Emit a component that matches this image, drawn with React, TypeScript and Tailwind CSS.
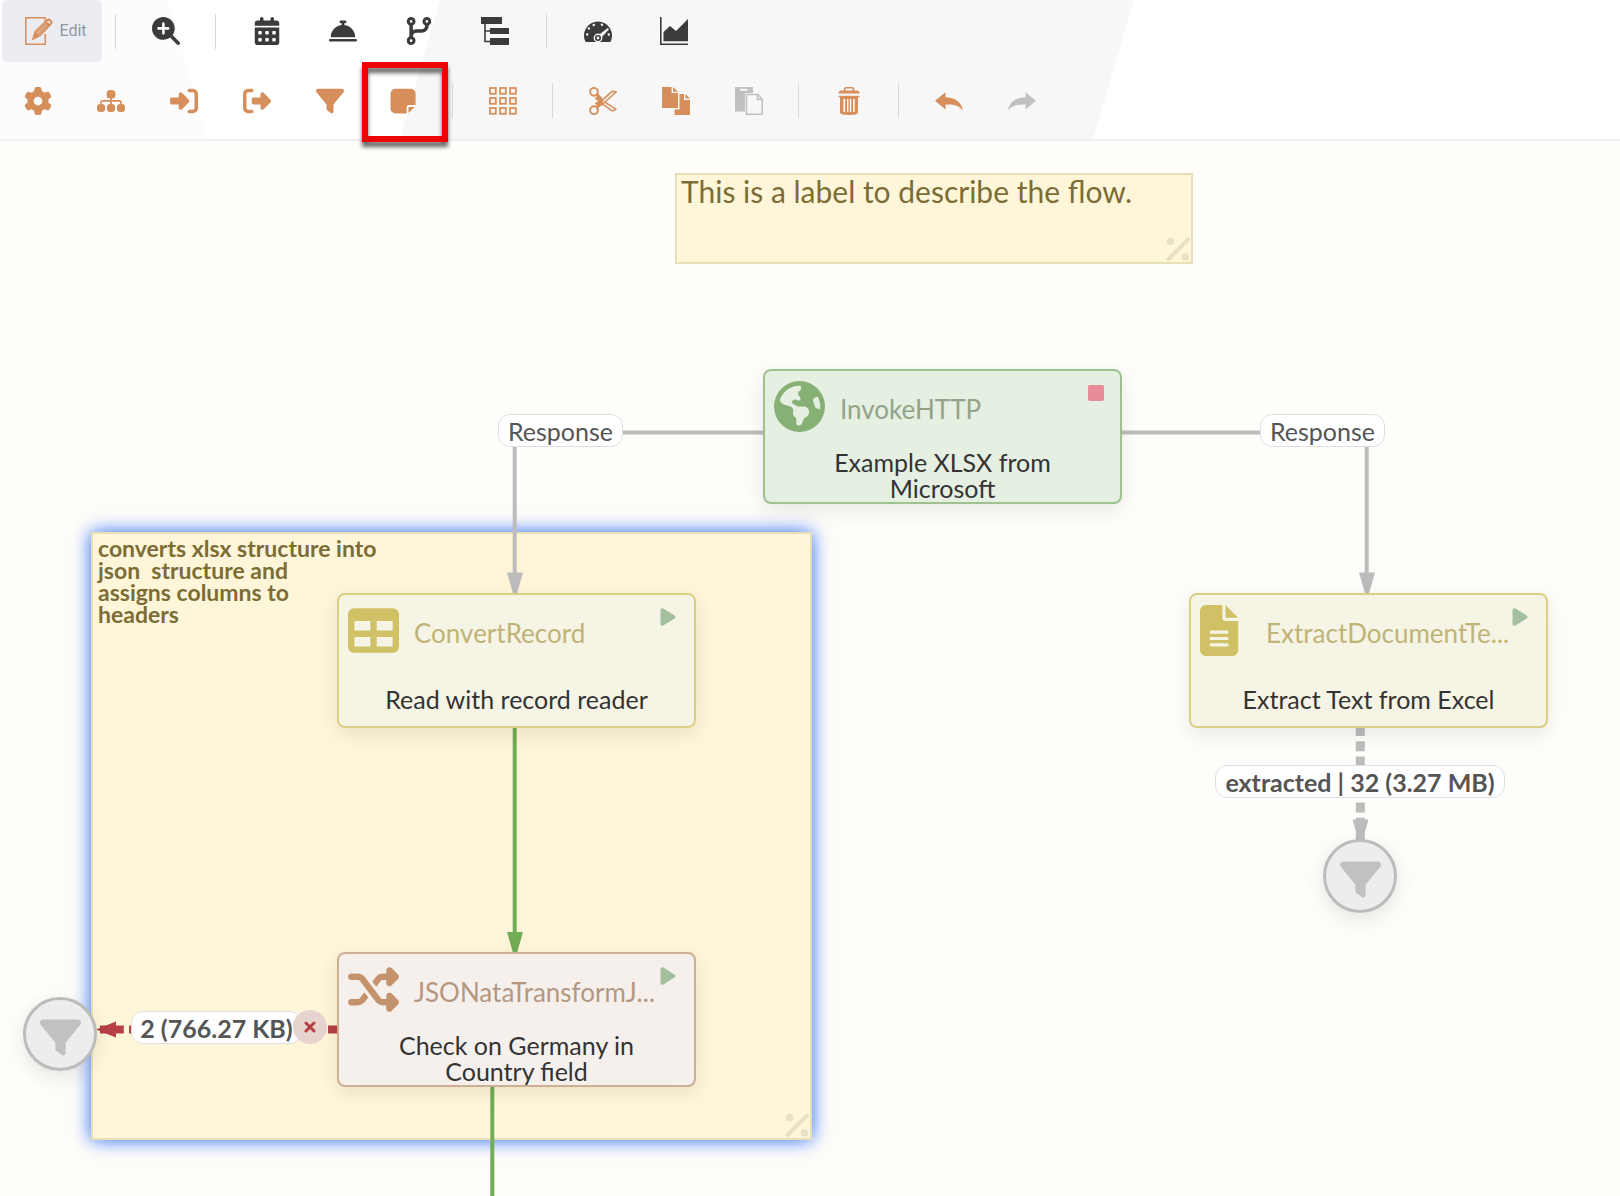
import React from 'react';
import {
    FaMagnifyingGlassPlus,
    FaCalendarDays,
    FaBellConcierge,
    FaCodeBranch,
    FaGear,
    FaRightToBracket,
    FaRightFromBracket,
    FaFilter,
    FaEarthAmericas,
    FaTable,
    FaShuffle,
    FaFileLines,
    FaPlay,
} from 'react-icons/fa6';

const ICON = 'w-7 h-7';

/* Toolbar icons, all on a 28px grid */

const EditIcon = () => (
    <svg viewBox="0 0 28 28" className={ICON} fill="none" stroke="currentColor">
        <path d="M20.3 5V.8H.8v26.4h19.5V17" strokeWidth="1.5" />
        <path d="M8 22l2.2-7.6L22.5 2.8c1.6-1.4 5.2 1.8 3.9 3.6L15 18.6z" strokeWidth="1.6" fill="currentColor" fillOpacity="0.35" />
        <path d="M8 22l2.6-7.8 4.4 4.4z" fill="currentColor" stroke="none" />
        <path d="M20.4 4.6l4.4 4.2M12.2 15.2L22 6M13.8 17l9.4-9.6" strokeWidth="1.5" />
    </svg>
);

const TreeIcon = () => (
    <svg viewBox="0 0 28 28" className={ICON} fill="currentColor">
        <path d="M0 0h21v7H0zM9 11h19v6H9zM9 21h19v7H9z" />
        <path d="M4 7v17.5h5M4 14h5" fill="none" stroke="currentColor" strokeWidth="1.6" />
    </svg>
);

const GaugeIcon = () => (
    <svg viewBox="0 0 28 28" className={ICON}>
        <path d="M1.6 25A14 14 0 1 1 26.4 25z" fill="currentColor" />
        <g fill="#f7f7f7">
            <circle cx="3.2" cy="17.5" r="1.2" />
            <circle cx="4.9" cy="11.4" r="1.2" />
            <circle cx="9.7" cy="8" r="1.2" />
            <circle cx="18" cy="7.8" r="1.2" />
            <circle cx="24.8" cy="17.5" r="1.2" />
            <path d="M14 18.5l9.8-7.6 1.2 1.4-8 8.6z" />
            <circle cx="14" cy="21" r="4.4" />
        </g>
        <circle cx="14" cy="21" r="2.2" fill="none" stroke="currentColor" strokeWidth="1.6" />
    </svg>
);

const ChartIcon = () => (
    <svg viewBox="0 0 28 28" className={ICON}>
        <path d="M.8 0v27.2H28" fill="none" stroke="currentColor" strokeWidth="1.6" />
        <path d="M3.5 24.3V15L10 9l6 5L28 2v22.3z" fill="currentColor" />
    </svg>
);

const SitemapIcon = () => (
    <svg viewBox="0 0 28 28" className={ICON} fill="currentColor">
        <rect x="9.6" y="3" width="8.8" height="8.6" rx="3.6" />
        <rect x="0" y="17" width="8" height="8" rx="3" />
        <rect x="10" y="17" width="8" height="8" rx="3" />
        <rect x="20" y="17" width="8" height="8" rx="3" />
        <path d="M14 10v8M4 18v-2.4q0-1.8 1.8-1.8h16.4q1.8 0 1.8 1.8V18" fill="none" stroke="currentColor" strokeWidth="1.7" />
    </svg>
);

const NoteIcon = () => (
    <svg viewBox="0 0 28 28" className={ICON} fill="currentColor">
        <path d="M6 1.8h15.6a5 5 0 0 1 5 5V18h-6.7q-2.2 0-2.2 2.2v6.2H6.500a5 5 0 0 1-5-5V6.8a5 5 0 0 1 5-5z" />
        <path d="M19.500 20h6.2l-6.200 6z" />
    </svg>
);

const GridIcon = () => (
    <svg viewBox="0 0 28 28" className={ICON} fill="none" stroke="currentColor" strokeWidth="1.8">
        {[1, 11, 21].map((y) =>
            [1, 11, 21].map((x) => <rect key={`${x}-${y}`} x={x} y={y} width="5.8" height="5.8" />)
        )}
    </svg>
);

const ScissorsIcon = () => (
    <svg viewBox="0 0 28 28" className={ICON} fill="none" stroke="currentColor">
        <circle cx="5" cy="4.8" r="3.9" strokeWidth="1.9" />
        <circle cx="5" cy="23.2" r="3.9" strokeWidth="1.9" />
        <path d="M8.500 7l4 4.200c1.200 1.600 1.200 4 0 5.600L8.500 21c.6-3-.2-4-2.500-4.600 2.600 0 3.400-1 3.400-2.400S8.600 11.600 6 11.600c2.300-.6 3.100-1.600 2.500-4.600z" fill="currentColor" strokeWidth="1.400" />
        <path d="M10.5 15.8L23 4.4l4.2.6L12 18.5M15.5 14.8l11.3 7.4c-1.4 1.5-3 1.7-4.300 1.2L13 16.6" strokeWidth="1.6" />
    </svg>
);

const CopyIcon = () => (
    <svg viewBox="0 0 28 28" className={ICON} fill="currentColor">
        <path d="M0 0h9.6v6H16v15H0z" />
        <path d="M11 0l5 4.8h-5z" />
        <path d="M17.5 7H22v6h6v15H12.5v-5.5h5z" />
        <path d="M23.5 7l4.5 4.6h-4.5z" />
    </svg>
);

const PasteIcon = () => (
    <svg viewBox="0 0 28 28" className={ICON}>
        <path d="M0 0h18v6h-8v18.5H0z" fill="currentColor" />
        <path d="M5 1.8h7.5v2H5z" fill="#f7f7f7" />
        <path d="M11.5 7.5H23l4.2 5v14.7H11.5z" fill="#f7f7f7" stroke="currentColor" strokeWidth="1.5" />
        <path d="M22.5 7.5v5h5" fill="none" stroke="currentColor" strokeWidth="1.5" />
    </svg>
);

const TrashIcon = () => (
    <svg viewBox="0 0 28 28" className={ICON} fill="currentColor">
        <path d="M9.6 4V1.8q0-1 1-1h6.8q1 0 1 1V4" fill="none" stroke="currentColor" strokeWidth="1.6" />
        <path d="M5.5 3.6h17l2 1.4v1.6h-21V5z" />
        <path d="M3.5 8.8h21v1.4h-21z" />
        <path
            fillRule="evenodd"
            d="M5 10h18v15.5q0 2.5-9 2.5t-9-2.5zM8.4 12v13h1.7V12zM12 12v13h1.4V12zM14.8 12v13h1.4V12zM18 12v13h1.7V12z"
        />
    </svg>
);

const UndoIcon = () => (
    <svg viewBox="0 0 28 28" className={ICON} fill="currentColor">
        <path d="M0 13.8L10.5 5.2v5c9 .2 16.5 4.6 17.3 13.6-3.5-5.4-9-6.6-17.3-6.2v4.8z" />
    </svg>
);

const RedoIcon = () => (
    <svg viewBox="0 0 28 28" className={ICON} fill="currentColor">
        <path d="M28 13.8L17.5 5.2v5C8.5 10.4 1 14.8.2 23.8c3.5-5.4 9-6.6 17.3-6.2v4.8z" />
    </svg>
);

/* Toolbar parts */

interface ToolButtonProps {
    label: string;
    wide?: boolean;
    disabled?: boolean;
    highlighted?: boolean;
    children: React.ReactNode;
}

const ToolButton: React.FC<ToolButtonProps> = ({ label, wide, disabled, highlighted, children }) => (
    <button
        aria-label={label}
        disabled={disabled}
        className={`relative flex h-full shrink-0 items-center justify-center disabled:text-[#bfc1c0] ${wide ? 'w-[76px]' : 'w-[73px]'}`}
    >
        {children}
        {highlighted && (
            <span className="absolute top-0 -left-1 z-20 h-20 w-[86px] border-6 border-[#eb0505] drop-shadow-[0_5px_2px_rgba(0,0,0,0.6)]" />
        )}
    </button>
);

const Separator = () => <div className="mx-[13px] h-[35px] w-px shrink-0 bg-[#d7d8de]" />;

const Toolbar = () => (
    <header className="relative z-10 border-b-2 border-[#efeef0] bg-white">
        {/* Slanted backdrop */}
        <div className="absolute inset-y-0 left-0 w-[208px] bg-[#fcfcfd] [clip-path:polygon(0_0,168px_0,180px_43px,100%_100%,0_100%)]" />
        <div className="absolute inset-y-0 left-[400px] w-[734px] bg-[#f7f7f7] [clip-path:polygon(40px_0,100%_0,693px_100%,0_100%)]" />

        <div className="relative flex h-[62px] items-center pl-0.5 text-[#3b3b3b]">
            <button className="flex h-full w-[100px] shrink-0 items-center justify-center gap-1.5 rounded-md bg-[#ecedf2] pl-2 text-[#d68f5b]">
                <EditIcon />
                <span className="font-['Roboto',sans-serif] text-base text-[#8f96a5]">Edit</span>
            </button>
            <Separator />
            <ToolButton label="Search"><FaMagnifyingGlassPlus className={ICON} /></ToolButton>
            <Separator />
            <ToolButton label="Schedule" wide><FaCalendarDays className={ICON} /></ToolButton>
            <ToolButton label="Services" wide><FaBellConcierge className={ICON} /></ToolButton>
            <ToolButton label="Versions" wide><FaCodeBranch className={ICON} /></ToolButton>
            <ToolButton label="Hierarchy" wide><TreeIcon /></ToolButton>
            <Separator />
            <ToolButton label="Dashboard" wide><GaugeIcon /></ToolButton>
            <ToolButton label="Statistics" wide><ChartIcon /></ToolButton>
        </div>

        <div className="relative flex h-[77px] items-center pl-px text-[#d68f5b]">
            <ToolButton label="Processor"><FaGear className={ICON} /></ToolButton>
            <ToolButton label="Process group"><SitemapIcon /></ToolButton>
            <ToolButton label="Input port"><FaRightToBracket className={ICON} /></ToolButton>
            <ToolButton label="Output port"><FaRightFromBracket className={ICON} /></ToolButton>
            <ToolButton label="Funnel"><FaFilter className={ICON} /></ToolButton>
            <ToolButton label="Label" highlighted><NoteIcon /></ToolButton>
            <Separator />
            <ToolButton label="Align"><GridIcon /></ToolButton>
            <Separator />
            <ToolButton label="Cut"><ScissorsIcon /></ToolButton>
            <ToolButton label="Copy"><CopyIcon /></ToolButton>
            <ToolButton label="Paste" disabled><PasteIcon /></ToolButton>
            <Separator />
            <ToolButton label="Delete"><TrashIcon /></ToolButton>
            <Separator />
            <ToolButton label="Undo"><UndoIcon /></ToolButton>
            <ToolButton label="Redo" disabled><RedoIcon /></ToolButton>
        </div>
    </header>
);

/* Canvas parts */

const ResizeHandle = () => (
    <svg viewBox="0 0 24 24" className="absolute right-px bottom-px h-6 w-6" fill="#e9e1c3">
        <circle cx="4.5" cy="4.5" r="3.8" />
        <circle cx="19.5" cy="20" r="3.8" />
        <path d="M2.5 22L22 2.5" stroke="#e9e1c3" strokeWidth="4" strokeLinecap="round" />
    </svg>
);

interface ProcessorProps {
    place: string;
    tone: 'green' | 'yellow' | 'brown';
    icon: React.ReactNode;
    type: string;
    name: string;
    running?: boolean;
}

const tones = {
    green: { box: 'border-[#9dc28f] bg-[#e5efe2]', icon: 'text-[#87b174]', type: 'text-[#92a488]' },
    yellow: { box: 'border-[#dbcf82] bg-[#f6f4e5]', icon: 'text-[#d1c166]', type: 'text-[#c0b378]' },
    brown: { box: 'border-[#d0ad95] bg-[#f6f0ed]', icon: 'text-[#c4936d]', type: 'text-[#b5977f]' },
};

const Processor: React.FC<ProcessorProps> = ({ place, tone, icon, type, name, running }) => (
    <div
        className={`absolute flex h-[135px] w-[359px] flex-col rounded-lg border-2 leading-[26px] shadow-[0_6px_20px_rgba(0,0,0,0.09)] ${tones[tone].box} ${place}`}
    >
        <div className="flex h-[77px] shrink-0 pt-[10px] pl-[9px]">
            <div className={`w-[66px] text-[51px] ${tones[tone].icon}`}>{icon}</div>
            <div className={`pt-[15px] text-[26px] leading-[26px] whitespace-nowrap ${tones[tone].type}`}>{type}</div>
        </div>
        <div className="flex flex-1 items-center justify-center px-10 text-center text-[25px] leading-[26px] text-[#333]">{name}</div>
        {running ? (
            <FaPlay className="absolute top-3 right-4 h-5 w-5 text-[#a3bf9d]" />
        ) : (
            <span className="absolute top-[14px] right-4 h-4 w-4 rounded-xs bg-[#e88d97]" />
        )}
    </div>
);

const Funnel: React.FC<{ place: string }> = ({ place }) => (
    <div
        className={`absolute flex h-[74px] w-[74px] items-center justify-center rounded-full border-3 border-[#bcbcbc] bg-[#ededed] pt-1.5 text-[#c1c1c1] shadow-[0_6px_20px_rgba(0,0,0,0.1)] ${place}`}
    >
        <FaFilter className="h-[41px] w-[41px]" />
    </div>
);

const Pill: React.FC<{ place: string; bold?: boolean; children: React.ReactNode }> = ({ place, bold, children }) => (
    <div
        className={`absolute flex h-[33px] items-center justify-center rounded-xl border border-[#e0e0e4] bg-white text-[25px] leading-[30px] whitespace-nowrap text-[#555] ${bold ? 'font-bold' : ''} ${place}`}
    >
        {children}
    </div>
);

const Connections = () => (
    <svg className="absolute inset-0 h-full w-full" fill="none" strokeWidth="4">
        <g stroke="#bcbcbc">
            <path d="M763 291.500H514.700v142" />
            <path d="M1122 291.500h244.700v142" />
            <path d="M1360.300 585v115" strokeWidth="9" strokeDasharray="10 5.300" />
        </g>
        <g fill="#bcbcbc">
            <path d="M507 431.500h16l-6 21h-4zM1359 431.500h16l-6 21h-4zM1352.500 678.500h16l-6 21h-4z" />
        </g>
        <path d="M514.700 586v206M492.300 945v400" stroke="#71ad56" />
        <path d="M507 791h16l-6 21h-4z" fill="#71ad56" />
        <path d="M338 888.500H100" stroke="#b73f46" strokeWidth="8" strokeDasharray="10 5.300" />
        <path d="M96 888.500l20-8v16z" fill="#b73f46" />
    </svg>
);

const Canvas = () => (
    <main className="relative flex-1 overflow-hidden bg-[#fffdf9]">
        {/* Labels */}
        <div className="absolute top-8 left-[675px] h-[91px] w-[518px] border-2 border-[#e9dfb7] bg-[#fff6d9] pl-1 text-[30px] leading-8 text-[#7b6d35]">
            This is a label to describe the flow.
            <ResizeHandle />
        </div>
        <div className="absolute top-[391px] left-[91px] h-[608px] w-[721px] border-2 border-[#e9dfb7] bg-[#fff6d9] pt-[3px] pl-[5px] text-[23px] leading-[22px] font-bold whitespace-pre text-[#7b6d35] shadow-[0_0_18px_#2468ff]">
            {'converts xlsx structure into\njson  structure and\nassigns columns to\nheaders'}
            <ResizeHandle />
        </div>

        <Connections />

        <Pill place="top-[273px] left-[498px] w-[125px]">Response</Pill>
        <Pill place="top-[273px] left-[1260px] w-[125px]">Response</Pill>
        <Pill place="top-[624px] left-[1215px] w-[290px]" bold>extracted | 32 (3.27 MB)</Pill>
        <Pill place="top-[870px] left-[131px] w-[171px]" bold>2 (766.27 KB)</Pill>
        <div className="absolute top-[869px] left-[293px] flex h-[34px] w-[34px] items-center justify-center rounded-full bg-[#e8d4cf] text-[#b73f46]">
            <svg viewBox="0 0 12 12" className="h-3 w-3" fill="none" stroke="currentColor" strokeWidth="3" strokeLinecap="round">
                <path d="M2 2l8 8M10 2l-8 8" />
            </svg>
        </div>

        {/* Nodes */}
        <Processor place="top-[228px] left-[763px]" tone="green" icon={<FaEarthAmericas />} type="InvokeHTTP" name="Example XLSX from Microsoft" />
        <Processor place="top-[452px] left-[337px]" tone="yellow" icon={<FaTable />} type="ConvertRecord" name="Read with record reader" running />
        <Processor
            place="top-[452px] left-[1189px]"
            tone="yellow"
            icon={<FaFileLines preserveAspectRatio="xMinYMid meet" />}
            type="ExtractDocumentTe..."
            name="Extract Text from Excel"
            running
        />
        <Processor place="top-[811px] left-[337px]" tone="brown" icon={<FaShuffle />} type="JSONataTransformJ..." name="Check on Germany in Country field" running />
        <Funnel place="top-[698px] left-[1323px]" />
        <Funnel place="top-[856px] left-[23px]" />
    </main>
);

const App = () => (
    <div className="flex min-h-screen flex-col font-['Lato',sans-serif]">
        <Toolbar />
        <Canvas />
    </div>
);

export default App;
